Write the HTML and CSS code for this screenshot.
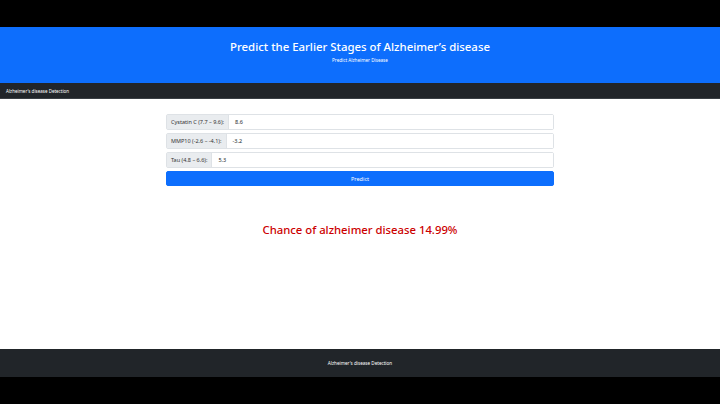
FILE: index.html
```html
<!DOCTYPE html>
<html>
<head>
<meta charset="utf-8">
<link rel="stylesheet" href="styles.css">
</head>
<body>
<div class="page">
  <header class="hero">
    <h1 class="hero-title">Predict the Earlier Stages of Alzheimer’s disease</h1>
    <p class="hero-sub">Predict Alzheimer Disease</p>
  </header>
  <nav class="navbar"><span class="brand">Alzheimer's disease Detection</span></nav>
  <main class="main">
    <form class="form">
      <div class="group"><span class="addon">Cystatin C (7.7 – 9.6):</span><span class="field">8.6</span></div>
      <div class="group"><span class="addon">MMP10 (-2.6 – -4.1):</span><span class="field">-3.2</span></div>
      <div class="group"><span class="addon">Tau (4.8 – 6.6):</span><span class="field">5.3</span></div>
      <button type="button" class="btn">Predict</button>
    </form>
    <p class="result">Chance of alzheimer disease 14.99%</p>
  </main>
  <footer class="footer">Alzheimer's disease Detection</footer>
</div>
</body>
</html>
```
FILE: styles.css
```css
html, body {
  margin: 0;
  padding: 0;
  background: #000;
  height: 404px;
  overflow: hidden;
}
body {
  padding-top: 27px;
  box-sizing: border-box;
  font-family: "Noto Sans", "Open Sans", sans-serif;
}
.page {
  display: flex;
  flex-direction: column;
  height: 350px;
  background: #fff;
}
.hero {
  height: 56px;
  background: #0d6efd;
  color: #fff;
  display: flex;
  flex-direction: column;
  align-items: center;
  box-sizing: border-box;
  padding-top: 12px;
}
.hero-title {
  margin: 0;
  font-size: 11.4px;
  font-weight: 500;
  line-height: 16px;
}
.hero-sub {
  margin: 2px 0 0;
  font-size: 4.6px;
  line-height: 6px;
}
.navbar {
  height: 16px;
  background: #212529;
  border-bottom: 1px solid #3a3f44;
  box-sizing: border-box;
  display: flex;
  align-items: center;
  padding-left: 6px;
}
.brand {
  color: #fff;
  font-size: 4.5px;
}
.main {
  flex: 1;
  display: flex;
  flex-direction: column;
  align-items: center;
}
.form {
  width: 388px;
  margin-top: 15px;
  display: flex;
  flex-direction: column;
  gap: 3px;
}
.group {
  display: flex;
  height: 16px;
  border: 1px solid #dee2e6;
  border-radius: 2px;
  box-sizing: border-box;
  font-size: 5.5px;
  color: #212529;
}
.addon {
  background: #e9ecef;
  border-right: 1px solid #dee2e6;
  display: flex;
  align-items: center;
  padding: 0 4px;
  color: #333;
}
.field {
  flex: 1;
  display: flex;
  align-items: center;
  padding: 0 6px;
  background: #fff;
}
.btn {
  height: 15px;
  border: 1px solid #0d6efd;
  border-radius: 2px;
  background: #0d6efd;
  color: #fff;
  font-family: inherit;
  font-size: 5.5px;
  padding: 0;
}
.result {
  margin: 36px 0 0;
  color: #c00;
  font-size: 11.3px;
  font-weight: 500;
}
.footer {
  height: 28px;
  background: #212529;
  color: #fff;
  font-size: 4.6px;
  display: flex;
  align-items: center;
  justify-content: center;
}
```
